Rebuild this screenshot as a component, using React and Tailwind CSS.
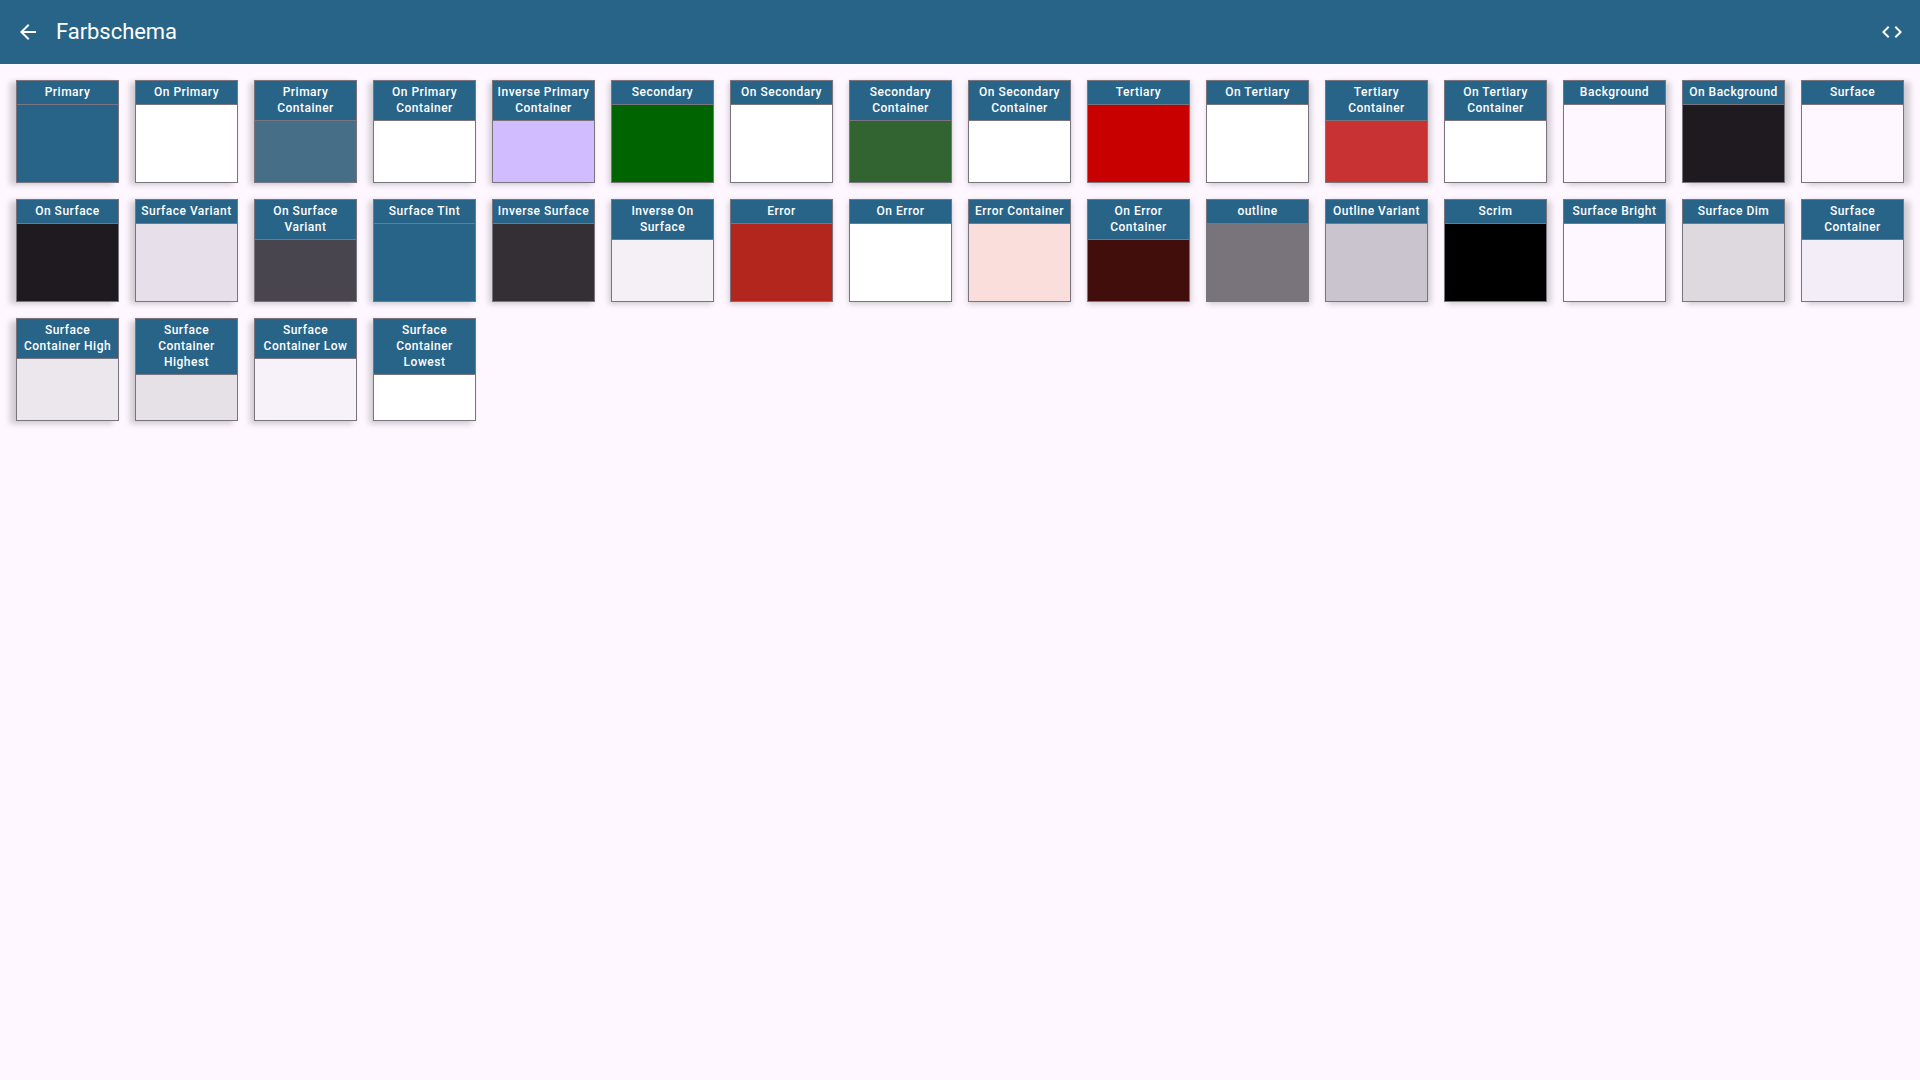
const swatches = [
  ['Primary', '#286488'],
  ['On Primary', '#ffffff'],
  ['Primary Container', '#466e87'],
  ['On Primary Container', '#ffffff'],
  ['Inverse Primary Container', '#d0bcff'],
  ['Secondary', '#006400'],
  ['On Secondary', '#ffffff'],
  ['Secondary Container', '#326432'],
  ['On Secondary Container', '#ffffff'],
  ['Tertiary', '#c80000'],
  ['On Tertiary', '#ffffff'],
  ['Tertiary Container', '#c83232'],
  ['On Tertiary Container', '#ffffff'],
  ['Background', '#fef7ff'],
  ['On Background', '#1f1a1f'],
  ['Surface', '#fef7ff'],
  ['On Surface', '#1f1a1f'],
  ['Surface Variant', '#e7e0eb'],
  ['On Surface Variant', '#49454f'],
  ['Surface Tint', '#286488'],
  ['Inverse Surface', '#332f34'],
  ['Inverse On Surface', '#f5eff6'],
  ['Error', '#b3261e'],
  ['On Error', '#ffffff'],
  ['Error Container', '#f9dedc'],
  ['On Error Container', '#410e0b'],
  ['outline', '#79747c'],
  ['Outline Variant', '#cac4cf'],
  ['Scrim', '#000000'],
  ['Surface Bright', '#fef7ff'],
  ['Surface Dim', '#ded8df'],
  ['Surface Container', '#f3edf7'],
  ['Surface Container High', '#ece6ed'],
  ['Surface Container Highest', '#e6e0e7'],
  ['Surface Container Low', '#f7f2fa'],
  ['Surface Container Lowest', '#ffffff'],
];

const COLUMNS = 16;

function shadowFor(index) {
  const column = index % COLUMNS;
  const row = Math.floor(index / COLUMNS);
  const x = ((column - 7.5) / 7.5) * 6;
  const y = 1.5 + row * 0.7;
  return `${x.toFixed(2)}px ${y.toFixed(2)}px 6px rgba(0,0,0,0.18), 0 0 3px rgba(0,0,0,0.04)`;
}

function Swatch({ name, color, index }) {
  return (
    <div
      className="relative flex h-[103px] w-[103px] flex-col"
      style={{ backgroundColor: color, boxShadow: shadowFor(index) }}
    >
      <div className="bg-[#286488] px-1 py-1 text-center text-[12px] leading-4 font-medium tracking-[0.5px] text-white">
        {name}
      </div>
      <div className="h-px bg-[#79747e]" />
      <div className="pointer-events-none absolute inset-0 border border-[#79747e]" />
    </div>
  );
}

export default function App() {
  return (
    <div className="min-h-screen bg-[#fef7ff] font-['Roboto',sans-serif]">
      <header className="flex h-16 items-center bg-[#286488] px-4 text-white">
        <svg className="size-6" viewBox="0 0 24 24" fill="currentColor">
          <path d="M20 11H7.83l5.59-5.59L12 4l-8 8 8 8 1.41-1.41L7.83 13H20v-2z" />
        </svg>
        <h1 className="ml-4 flex-1 text-[22px] leading-7 tracking-[-0.05px]">Farbschema</h1>
        <svg className="size-6" viewBox="0 0 24 24" fill="currentColor">
          <path d="M9.4 16.6L4.8 12l4.6-4.6L8 6l-6 6 6 6 1.4-1.4zm5.2 0l4.6-4.6-4.6-4.6L16 6l6 6-6 6-1.4-1.4z" />
        </svg>
      </header>
      <main className="flex flex-wrap gap-4 p-4 pr-0">
        {swatches.map(([name, color], i) => (
          <Swatch key={name} name={name} color={color} index={i} />
        ))}
      </main>
    </div>
  );
}
